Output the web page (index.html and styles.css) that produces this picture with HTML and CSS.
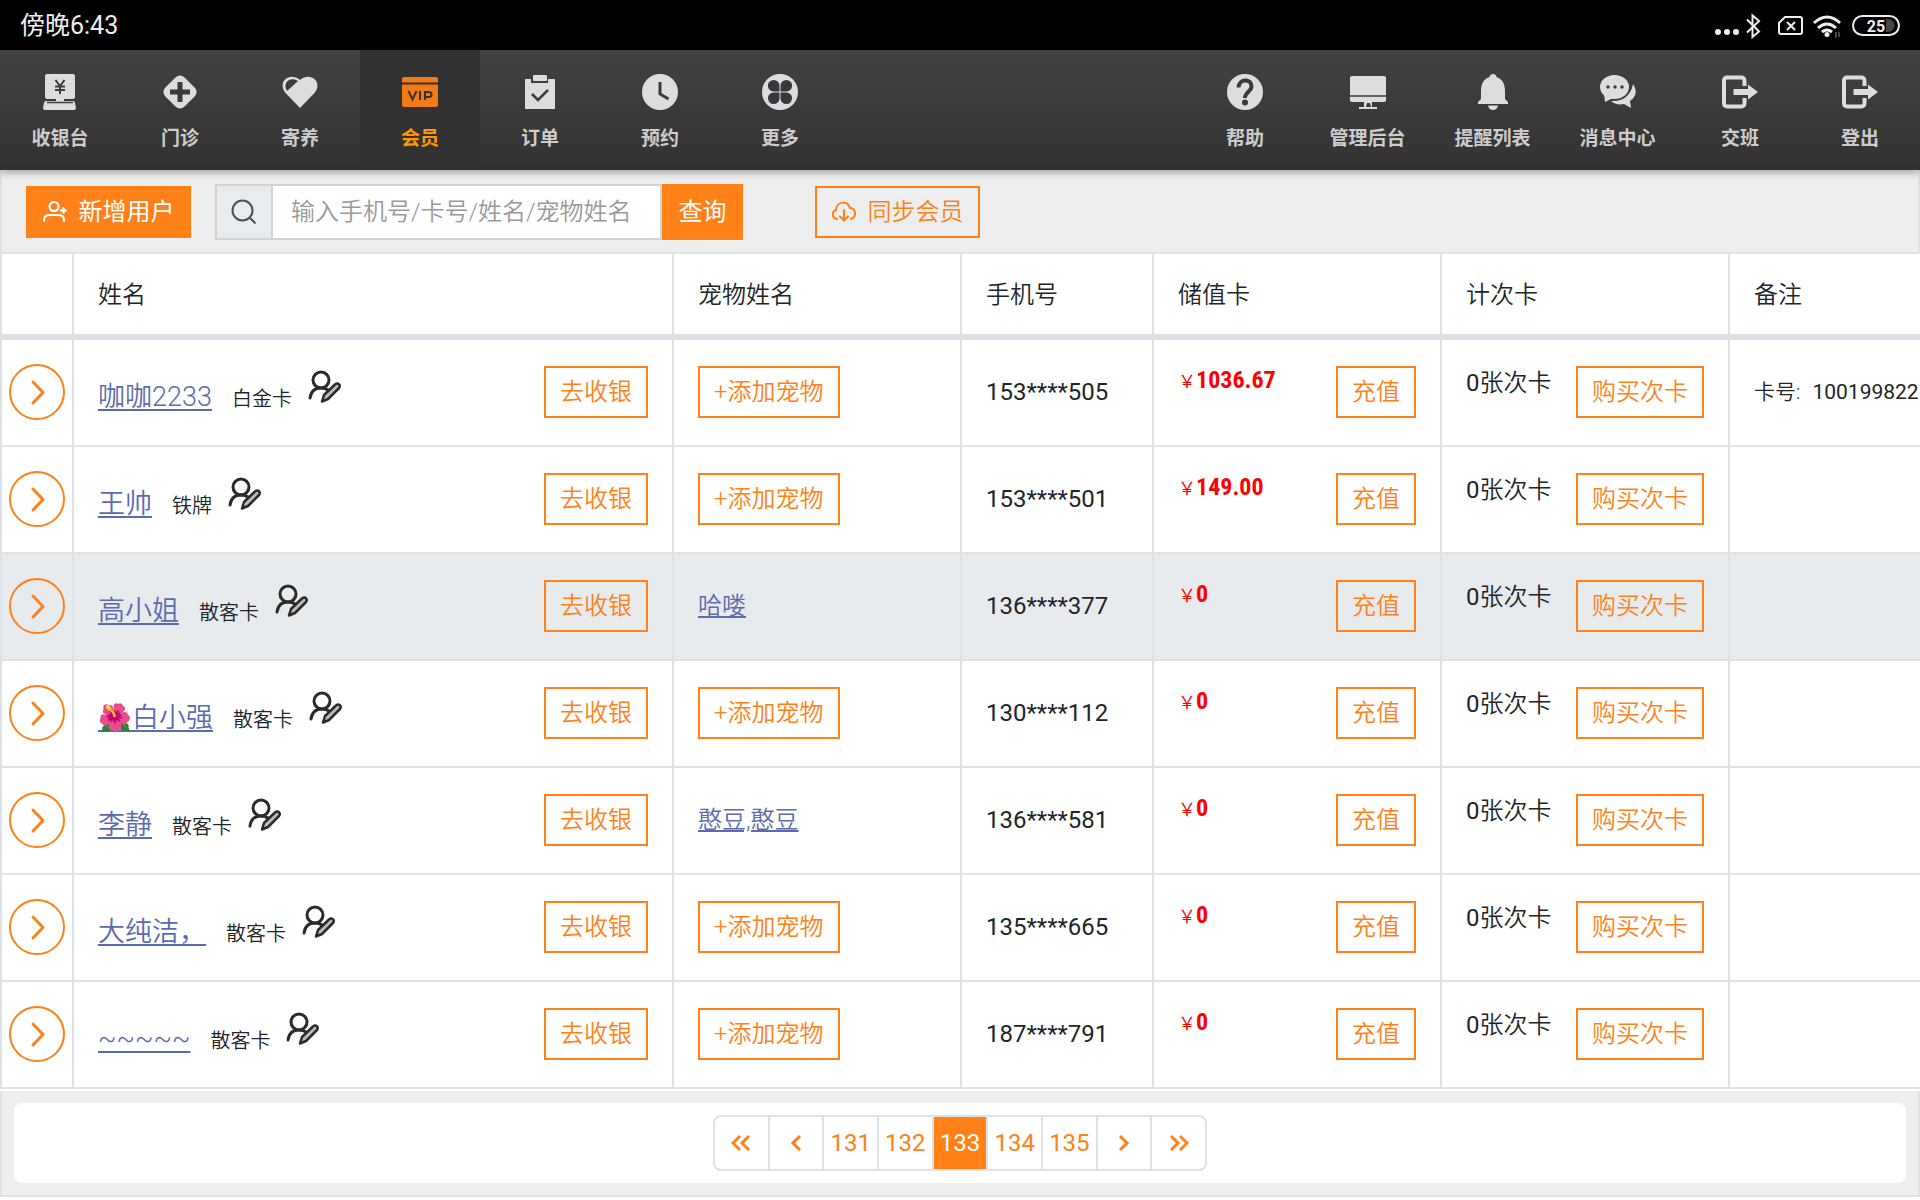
FILE: index.html
```html
<!DOCTYPE html>
<html lang="zh-CN">
<head>
<meta charset="utf-8">
<meta name="viewport" content="width=device-width, initial-scale=1">
<title>会员</title>
<link rel="stylesheet" href="styles.css">
</head>
<body>
<svg class="sprite" aria-hidden="true">
  <symbol id="i-edit" viewBox="0 0 36 36"><g fill="none" stroke="#2b2b2b" stroke-linecap="round"><circle cx="15" cy="10" r="8" stroke-width="3"/><path d="M4 28C5 21 9 18 15 18c3 0 5 .5 7 2" stroke-width="3"/><path d="M29 14.500c3-2.500 6 .5 4 3.500L22 29l-6 2.500L18 25z" fill="#bbb" stroke-width="2.500" stroke-linejoin="round"/></g></symbol>
  <symbol id="i-go" viewBox="0 0 56 56"><circle cx="28" cy="28" r="27" fill="none" stroke="#ff8118" stroke-width="2"/><path d="M24 18l10 10.500L24 39" fill="none" stroke="#ff8118" stroke-width="3" stroke-linecap="round" stroke-linejoin="round"/></symbol>
  <symbol id="i-exit" viewBox="0 0 36 36"><path d="M22.500 12V6.500a3 3 0 0 0-3-3H5a3 3 0 0 0-3 3v23a3 3 0 0 0 3 3h14.500a3 3 0 0 0 3-3V24" fill="none" stroke="#ddd" stroke-width="4"/><path d="M11.500 15H26v-4.500L36 18l-10 7.500V21H11.500z" fill="#ddd"/></symbol>
</svg>
<header class="status">
  <span class="time">傍晚6:43</span>
  <svg class="status-icons" width="188" height="26" viewBox="0 0 188 26">
    <g fill="#eee"><circle cx="4" cy="19" r="3"/><circle cx="13" cy="19" r="3"/><circle cx="22" cy="19" r="3"/></g>
    <g fill="none" stroke="#eee" stroke-width="2"><path d="M33 6.500l12 12-6.500 5.500V2.500L45 8 33 19.500"/><path d="M71 4h15q2 0 2 2v13q0 2-2 2H67q-2 0-2-2V10zM73 9l8 8M81 9l-8 8"/><path stroke-width="3" d="M100 10q13-12 26 0M104 15q9-8 18 0M108 19q5-4 10 0"/><rect x="139" y="3" width="46" height="19" rx="9.500"/></g>
    <path d="M172 6h2a6.500 6.500 0 0 1 0 13h-2z" fill="#444"/><circle cx="113" cy="21.500" r="2.500" fill="#eee"/><path d="M122 19v6m3-6v5" stroke="#888" stroke-width="1"/>
    <text class="battery" x="162" y="19" text-anchor="middle">25</text>
  </svg>
</header>
<nav class="nav">
  <a href="#"><svg viewBox="0 0 36 36"><rect x="3" y="0" width="30" height="25" rx="2" fill="#ddd"/><path d="M13.500 6l4.500 6 4.500-6M18 12v8M13 12.500h10M13 16h10" fill="none" stroke="#3d3d3d" stroke-width="2"/><path d="M14 24h8v3h9q2 0 2 2l1 5q0 2-2 2H3q-2 0-2-2l1-5q0-2 2-2h10z" fill="#ddd"/><path d="M5 28.500h26" stroke="#3d3d3d" stroke-width="1.500"/></svg>收银台</a>
  <a href="#"><svg viewBox="0 0 36 36"><rect x="4.500" y="4.500" width="27" height="27" rx="6" transform="rotate(45 18 18)" fill="#ddd"/><path d="M18 8v20M8 18h20" stroke="#3a3a3a" stroke-width="5"/></svg>门诊</a>
  <a href="#"><svg viewBox="0 0 36 36"><path d="M18 34L4 19.500C-6 8 8-3 18 6 28-3 42 8 32 19.500z" fill="#ddd"/><path d="M5 17C0 9 8 2 16 7z" fill="#3c3c3c"/></svg>寄养</a>
  <a href="#" class="active"><svg viewBox="0 0 36 36"><rect y="3" width="36" height="30" rx="2" fill="#f47a16"/><path d="M0 9.500h36" stroke="#333" stroke-width="2"/><g fill="none" stroke="#333" stroke-width="2"><path d="M6.500 17l4 8.500 4-8.500M18 17v9M23 26v-8h4q2.500 0 2.500 2.500T27 23h-4"/></g></svg>会员</a>
  <a href="#"><svg viewBox="0 0 36 36"><path d="M3 5h6v4h17V5h7v30H3z" fill="#ddd"/><rect x="11" y="1" width="14" height="6" rx="1" fill="#ddd"/><path d="M10 20l6 6 10-10" fill="none" stroke="#3a3a3a" stroke-width="2.500"/></svg>订单</a>
  <a href="#"><svg viewBox="0 0 36 36"><circle cx="18" cy="18" r="18" fill="#ddd"/><path d="M18 8v12l8.500 5" fill="none" stroke="#3a3a3a" stroke-width="3"/></svg>预约</a>
  <a href="#"><svg viewBox="0 0 36 36"><circle cx="18" cy="18" r="18" fill="#ddd"/><g fill="#3b373e"><path d="M17.500 17.500h-6a5.800 5.800 0 1 1 6-6zM18.500 17.500h6a5.800 5.800 0 1 0-6-6zM17.500 18.500h-6a5.800 5.800 0 1 0 6 6zM18.500 18.500h6a5.800 5.800 0 1 1-6 6z"/></g></svg>更多</a>
  <span class="spacer"></span>
  <a href="#"><svg viewBox="0 0 36 36"><circle cx="18" cy="18" r="18" fill="#ddd"/><path d="M11.500 13.500C12 4 25 4.500 24.500 12.500c0 5-6.500 5-6.500 11.500" fill="none" stroke="#3a3a3a" stroke-width="4"/><circle cx="18" cy="28.500" r="3" fill="#3a3a3a"/></svg>帮助</a>
  <a href="#" class="wide"><svg viewBox="0 0 36 36"><rect y="2" width="36" height="26" rx="2" fill="#ddd"/><path d="M0 22h36" stroke="#3a3a3a" stroke-width="1.500"/><path d="M14 28v5h-5v2h18v-2h-5v-5z" fill="#ddd"/><path d="M17 29h3l1 4h-5z" fill="#3a3a3a"/></svg>管理后台</a>
  <a href="#" class="wide"><svg viewBox="0 0 36 36"><path d="M18 0q3 0 3.500 3C28 5 30 11 30 17v8l3 3v2H3v-2l3-3v-8C6 11 8 5 14.500 3 15 0 18 0 18 0zM13 31.500h10q-1 4.500-5 4.500t-5-4.500z" fill="#ddd"/></svg>提醒列表</a>
  <a href="#" class="wide"><svg viewBox="0 0 36 36"><path d="M33 10c4 6 4 12-3 17l1 7-7-4c-5 1-10 0-13-3C22 28 31 22 33 10z" fill="#ddd"/><ellipse cx="14.500" cy="13" rx="14.500" ry="12" fill="#ddd"/><path d="M4 19l1 9 8-4z" fill="#ddd"/><g fill="#3b3b3b"><circle cx="8" cy="13" r="1.700"/><circle cx="15" cy="13" r="1.700"/><circle cx="22" cy="13" r="1.700"/></g></svg>消息中心</a>
  <a href="#"><svg><use href="#i-exit"/></svg>交班</a>
  <a href="#"><svg><use href="#i-exit"/></svg>登出</a>
</nav>
<main class="main">
  <form class="tools">
    <button type="button" class="btn solid add"><svg viewBox="0 0 24 24" fill="none" stroke="#fff" stroke-width="2.200" stroke-linecap="round"><circle cx="11" cy="6.500" r="4.500"/><path d="M1 21v-1q0-5 6-5h8q6 0 6 5v1M20.500 8v5M18 10.500h5"/></svg>新增用户</button>
    <div class="search">
      <label class="lens" for="q" aria-label="搜索"><svg viewBox="0 0 26 26" fill="none" stroke="#495057" stroke-width="2"><circle cx="11.500" cy="11.500" r="10"/><path d="M18.500 18.500l6 6"/></svg></label>
      <input id="q" type="text" placeholder="输入手机号/卡号/姓名/宠物姓名">
      <button type="button" class="query">查询</button>
    </div>
    <button type="button" class="btn sync"><svg viewBox="0 0 24 24" fill="none" stroke="#ff8118" stroke-width="2" stroke-linecap="round"><path d="M5 19C-1 18 0 11 4 10 4 2 15-1 18 8c6 0 7 9 1 11M12 10v10M8 16.500l4 4 4-4"/></svg>同步会员</button>
  </form>
  <div class="table-wrap">
  <table>
    <colgroup><col class="c-go"><col class="c-name"><col class="c-pet"><col class="c-phone"><col class="c-store"><col class="c-count"><col class="c-note"></colgroup>
    <thead><tr><th></th><th>姓名</th><th>宠物姓名</th><th>手机号</th><th>储值卡</th><th>计次卡</th><th>备注</th></tr></thead>
    <tbody id="rows"></tbody>
  </table>
  </div>
  <div class="footer">
    <div class="pager-panel">
      <div class="pager">
        <button aria-label="首页"><svg viewBox="0 0 20 20"><path d="M9 3l-7 7 7 7M18 3l-7 7 7 7"/></svg></button><button aria-label="上一页"><svg viewBox="0 0 20 20"><path d="M14 3l-7 7 7 7"/></svg></button><button>131</button><button>132</button><button class="on">133</button><button>134</button><button>135</button><button aria-label="下一页"><svg viewBox="0 0 20 20"><path d="M6 3l7 7-7 7"/></svg></button><button aria-label="末页"><svg viewBox="0 0 20 20"><path d="M2 3l7 7-7 7M11 3l7 7-7 7"/></svg></button>
      </div>
    </div>
  </div>
</main>
<script src="app.js"></script>
</body>
</html>
```
FILE: styles.css
```css
* { box-sizing: border-box; }
body {
  margin: 0;
  min-height: 100vh;
  display: flex;
  flex-direction: column;
  overflow: hidden;
  background: #fff;
  color: #212529;
  font: 350 24px/36px Roboto, "Noto Sans CJK SC", sans-serif;
}
button, input { font: inherit; }
a { color: inherit; }
.sprite { position: absolute; width: 0; height: 0; }

.status {
  height: 50px;
  padding: 2px 18px 0 20px;
  display: flex;
  align-items: center;
  justify-content: space-between;
  background: #000;
  color: #eee;
  font-size: 25px;
  font-weight: 400;
}
.battery { font: 700 16px Roboto, sans-serif; fill: #eee; }

.nav {
  position: relative;
  height: 120px;
  display: flex;
  background: linear-gradient(#424242, #323232);
  box-shadow: 0 2px 8px rgba(0, 0, 0, .35);
}
.nav a {
  width: 120px;
  padding-top: 24px;
  display: flex;
  flex-direction: column;
  align-items: center;
  gap: 15px;
  color: #ccc;
  font-size: 19px;
  font-weight: 700;
  line-height: 28px;
  text-decoration: none;
}
.nav .wide { width: 125px; }
.nav svg { width: 36px; height: 36px; }
.nav .active { background: #323232; color: #ff9800; }
.spacer { flex: 1; }

.main {
  flex: 1;
  margin-bottom: 3px;
  display: flex;
  flex-direction: column;
  border-bottom: 2px solid #dee2e6;
  background: #eee;
}
.tools {
  height: 82px;
  padding: 2px 24px 0;
  display: flex;
  align-items: center;
  border: solid #dee2e6;
  border-width: 0 2px;
}
.btn {
  height: 52px;
  padding: 0 14px;
  border: 2px solid #ff8118;
  border-radius: 0;
  background: transparent;
  color: #ff8118;
  white-space: nowrap;
}
.btn svg { width: 24px; height: 24px; }
.solid { background: #ff8118; color: #fff; font-weight: 400; }
.add, .sync {
  width: 165px;
  padding: 0;
  display: flex;
  align-items: center;
  justify-content: center;
  gap: 12px;
}
.search { display: flex; height: 56px; margin: 0 72px 0 24px; }
.lens {
  width: 56px;
  display: flex;
  align-items: center;
  justify-content: center;
  border: 2px solid #ced4da;
  border-right: 0;
  background: #e9ecef;
}
.lens svg { width: 26px; height: 26px; }
.search input {
  width: 391px;
  padding: 0 18px;
  border: 2px solid #ced4da;
  border-radius: 0;
  background: #fff;
  outline: 0;
}
.search input::placeholder { color: #999; opacity: 1; }
.query {
  width: 81px;
  padding: 0;
  border: 0;
  background: #ff8118;
  color: #fff;
  font-weight: 400;
}

.table-wrap { overflow: hidden; padding-bottom: 2px; background: #fff; }
table {
  width: 100%;
  table-layout: fixed;
  border-collapse: separate;
  border-spacing: 0;
  border-top: 2px solid #dee2e6;
}
.c-go { width: 74px; }
.c-name { width: 600px; }
.c-pet, .c-store, .c-count { width: 288px; }
.c-phone { width: 192px; }
th, td {
  padding: 0 24px;
  border: solid #dee2e6;
  border-width: 0 2px 2px 0;
  text-align: left;
  white-space: nowrap;
}
th:first-child, td:first-child { padding-left: 7px; padding-right: 7px; border-left-width: 2px; }
th:last-child, td:last-child { border-right: 0; }
th { height: 86px; padding-top: 2px; border-bottom-width: 6px; font-weight: inherit; }
td { height: 107px; padding-bottom: 2px; }
.hover { background: #e7ebee; }
.cell { display: flex; align-items: center; justify-content: space-between; }
.link { color: #5c6bb0; }
.person { display: flex; align-items: baseline; padding-top: 4px; }
.person .link { font-size: 27px; text-underline-offset: 3px; }
.person .level { margin: 0 14px 0 20px; font-size: 20px; }
.icon-btn {
  width: 36px;
  height: 36px;
  padding: 0;
  border: 0;
  background: none;
}
.icon-btn svg { width: 36px; height: 36px; display: block; }
.go { width: 56px; height: 56px; padding: 0; border: 0; background: none; display: block; }
.go svg { width: 56px; height: 56px; display: block; }
.money { margin-bottom: 20px; color: #f00; font-size: 18px; }
.money b { font: 700 24px/32px "Roboto Condensed", Roboto, sans-serif; }
.times { margin-bottom: 18px; }
.phone, .num { font-weight: 400; }
.note { font-size: 21px; }
.note .num { margin-left: 12px; }

.footer { flex: 1; padding: 12px; border: solid #dee2e6; border-width: 0 2px; }
.pager-panel {
  height: 80px;
  display: flex;
  align-items: center;
  justify-content: center;
  border-radius: 8px;
  background: #fff;
}
.pager {
  width: 494px;
  height: 56px;
  display: flex;
  border: 2px solid #dee2e6;
  border-radius: 8px;
  font-weight: 400;
}
.pager button {
  flex: 1;
  padding: 0;
  border: 0;
  border-right: 2px solid #dee2e6;
  background: none;
  color: #ff8118;
}
.pager button:last-child { border-right: 0; }
.pager .on { background: #ff8118; color: #fff; }
.pager svg {
  width: 20px;
  height: 20px;
  margin: 0 auto;
  display: block;
  fill: none;
  stroke: #ff8118;
  stroke-width: 3;
}
```
FILE: app.js
```js
const members = [
  ['咖咖2233', '白金卡', '', '153****505', '1036.67', '100199822'],
  ['王帅', '铁牌', '', '153****501', '149.00'],
  ['高小姐', '散客卡', '哈喽', '136****377', '0'],
  ['🌺白小强', '散客卡', '', '130****112', '0'],
  ['李静', '散客卡', '憨豆,憨豆', '136****581', '0'],
  ['大纯洁，', '散客卡', '', '135****665', '0'],
  ['~~~~~', '散客卡', '', '187****791', '0'],
];

document.getElementById('rows').innerHTML = members.map(([name, level, pet, phone, money, card], i) => `
  <tr${i === 2 ? ' class="hover"' : ''}>
    <td><button class="go" aria-label="进入"><svg><use href="#i-go"/></svg></button></td>
    <td><div class="cell"><div class="person"><a class="link" href="#">${name}</a><span class="level">${level}</span><button class="icon-btn" aria-label="编辑"><svg><use href="#i-edit"/></svg></button></div><button class="btn">去收银</button></div></td>
    <td>${pet ? `<a class="link" href="#">${pet}</a>` : '<button class="btn">+添加宠物</button>'}</td>
    <td class="phone">${phone}</td>
    <td><div class="cell"><span class="money">￥<b>${money}</b></span><button class="btn">充值</button></div></td>
    <td><div class="cell"><span class="times"><span class="num">0</span>张次卡</span><button class="btn">购买次卡</button></div></td>
    <td class="note">${card ? `卡号:<span class="num">${card}</span>` : ''}</td>
  </tr>`).join('');
```
